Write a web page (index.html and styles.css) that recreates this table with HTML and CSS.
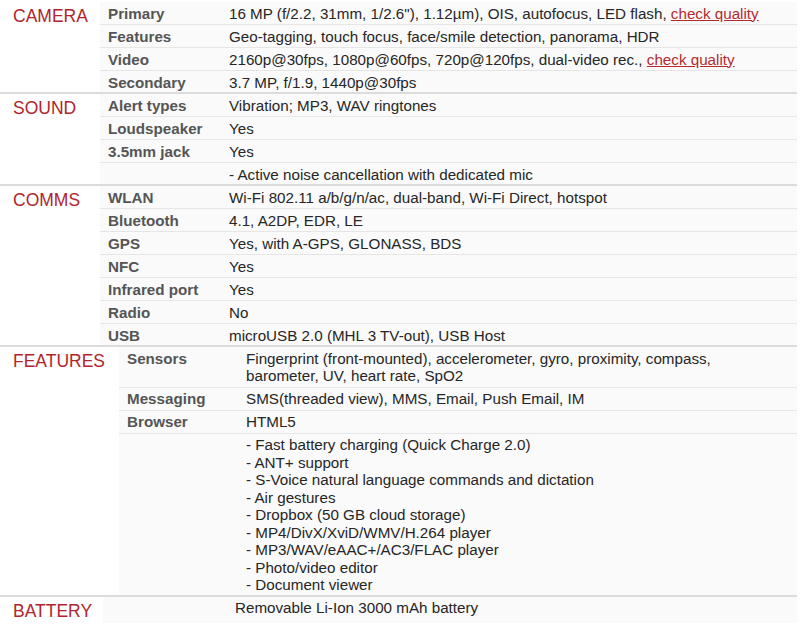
FILE: index.html
```html
<!DOCTYPE html>
<html>
<head>
<meta charset="utf-8">
<link rel="stylesheet" href="styles.css">
</head>
<body>
<div class="specs">
  <section class="sec">
    <div class="head">CAMERA</div>
    <div class="rows">
      <div class="row"><div class="lbl">Primary</div><div class="val">16 MP (f/2.2, 31mm, 1/2.6"), 1.12µm), OIS, autofocus, LED flash, <a href="#">check quality</a></div></div>
      <div class="row"><div class="lbl">Features</div><div class="val">Geo-tagging, touch focus, face/smile detection, panorama, HDR</div></div>
      <div class="row"><div class="lbl">Video</div><div class="val">2160p@30fps, 1080p@60fps, 720p@120fps, dual-video rec., <a href="#">check quality</a></div></div>
      <div class="row"><div class="lbl">Secondary</div><div class="val">3.7 MP, f/1.9, 1440p@30fps</div></div>
    </div>
  </section>
  <section class="sec">
    <div class="head">SOUND</div>
    <div class="rows">
      <div class="row"><div class="lbl">Alert types</div><div class="val">Vibration; MP3, WAV ringtones</div></div>
      <div class="row"><div class="lbl">Loudspeaker</div><div class="val">Yes</div></div>
      <div class="row"><div class="lbl">3.5mm jack</div><div class="val">Yes</div></div>
      <div class="row"><div class="lbl"></div><div class="val">- Active noise cancellation with dedicated mic</div></div>
    </div>
  </section>
  <section class="sec">
    <div class="head">COMMS</div>
    <div class="rows">
      <div class="row"><div class="lbl">WLAN</div><div class="val">Wi-Fi 802.11 a/b/g/n/ac, dual-band, Wi-Fi Direct, hotspot</div></div>
      <div class="row"><div class="lbl">Bluetooth</div><div class="val">4.1, A2DP, EDR, LE</div></div>
      <div class="row"><div class="lbl">GPS</div><div class="val">Yes, with A-GPS, GLONASS, BDS</div></div>
      <div class="row"><div class="lbl">NFC</div><div class="val">Yes</div></div>
      <div class="row"><div class="lbl">Infrared port</div><div class="val">Yes</div></div>
      <div class="row"><div class="lbl">Radio</div><div class="val">No</div></div>
      <div class="row"><div class="lbl">USB</div><div class="val">microUSB 2.0 (MHL 3 TV-out), USB Host</div></div>
    </div>
  </section>
  <section class="sec sec-wide">
    <div class="head">FEATURES</div>
    <div class="rows">
      <div class="row"><div class="lbl">Sensors</div><div class="val">Fingerprint (front-mounted), accelerometer, gyro, proximity, compass,<br>barometer, UV, heart rate, SpO2</div></div>
      <div class="row"><div class="lbl">Messaging</div><div class="val">SMS(threaded view), MMS, Email, Push Email, IM</div></div>
      <div class="row"><div class="lbl">Browser</div><div class="val">HTML5</div></div>
      <div class="row"><div class="lbl"></div><div class="val">- Fast battery charging (Quick Charge 2.0)<br>- ANT+ support<br>- S-Voice natural language commands and dictation<br>- Air gestures<br>- Dropbox (50 GB cloud storage)<br>- MP4/DivX/XviD/WMV/H.264 player<br>- MP3/WAV/eAAC+/AC3/FLAC player<br>- Photo/video editor<br>- Document viewer</div></div>
    </div>
  </section>
  <section class="sec sec-battery">
    <div class="head">BATTERY</div>
    <div class="rows">
      <div class="row"><div class="lbl"></div><div class="val">Removable Li-Ion 3000 mAh battery</div></div>
    </div>
  </section>
</div>
</body>
</html>
```

FILE: styles.css
```css
html, body {
  margin: 0;
  padding: 0;
  background: #fff;
}

body {
  font-family: "Liberation Sans", Arial, sans-serif;
  font-size: 15.2px;
  color: #262626;
}

.specs {
  width: 797px;
  padding-top: 2px;
}

.sec {
  display: flex;
  border-bottom: 2px solid #dcdcdc;
}

.sec-battery {
  border-bottom: none;
}

.head {
  flex: 0 0 100px;
  box-sizing: border-box;
  padding: 4px 0 0 13px;
  font-size: 17.5px;
  line-height: 20px;
  color: #b0252d;
  background: #fff;
}

.sec-wide .head {
  flex-basis: 119px;
}

.sec-battery .head {
  flex-basis: 103px;
}

.rows {
  flex: 1;
  display: flex;
  flex-direction: column;
}

.row {
  display: flex;
  background: #fafafa;
  border-bottom: 1px solid #e6e6e6;
}

.row:last-child {
  border-bottom: none;
}

.lbl {
  flex: 0 0 122px;
  box-sizing: border-box;
  padding: 2.5px 0 2px 8px;
  line-height: 17.5px;
  font-weight: bold;
  color: #555;
}

.sec-wide .lbl {
  flex-basis: 120px;
}

.sec-battery .lbl {
  flex-basis: 125px;
}

.val {
  flex: 1;
  padding: 2.5px 0 2px 7px;
  line-height: 17.5px;
  color: #262626;
}

.row:last-child .lbl,
.row:last-child .val {
  padding-bottom: 1px;
}

.sec-battery .row:last-child .lbl,
.sec-battery .row:last-child .val {
  padding-bottom: 6px;
}

.val a {
  color: #b52a2f;
  text-decoration: underline;
}
```
